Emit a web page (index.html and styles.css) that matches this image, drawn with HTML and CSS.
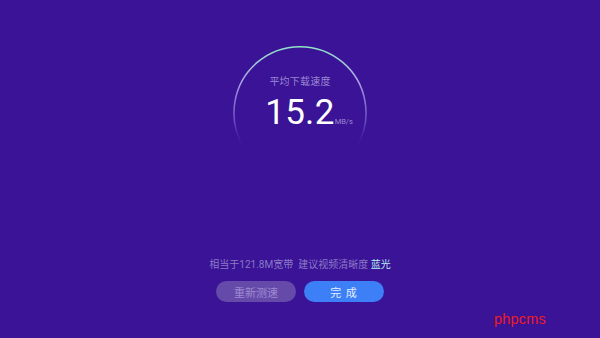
FILE: index.html
```html
<!DOCTYPE html>
<html>
<head>
<meta charset="utf-8">
<link rel="stylesheet" href="styles.css">
</head>
<body>
<div class="page">
  <div class="gauge">
    <svg class="arc" width="136" height="136" viewBox="0 0 136 136">
      <defs>
        <linearGradient id="g" x1="0" y1="0" x2="0" y2="1" gradientUnits="objectBoundingBox">
          <stop offset="0" stop-color="#8fe6c8"/>
          <stop offset="0.35" stop-color="#b9b3ee" stop-opacity="0.9"/>
          <stop offset="0.75" stop-color="#8a6fe0" stop-opacity="0.6"/>
          <stop offset="1" stop-color="#5a36c0" stop-opacity="0"/>
        </linearGradient>
      </defs>
      <path d="M 11 101 A 66 66 0 1 1 125 101" fill="none" stroke="url(#g)" stroke-width="1.6" stroke-linecap="round"/>
    </svg>
    <div class="title">平均下载速度</div>
    <div class="speed"><span class="num">15.2</span><span class="unit">MB/s</span></div>
  </div>
  <div class="info">相当于121.8M宽带&nbsp;&nbsp;建议视频清晰度 <span class="hl">蓝光</span></div>
  <div class="buttons">
    <button class="btn retry">重新测速</button>
    <button class="btn done">完 成</button>
  </div>
</div>
<div class="mark">phpcms</div>
</body>
</html>
```
FILE: styles.css
```css
html, body {
  margin: 0;
  padding: 0;
  width: 600px;
  height: 338px;
  overflow: hidden;
  background: #3a1396;
  font-family: Roboto, "Noto Sans CJK SC", sans-serif;
}
.page {
  display: flex;
  flex-direction: column;
  align-items: center;
  padding-top: 45px;
}
.gauge {
  position: relative;
  width: 136px;
  height: 136px;
  display: flex;
  flex-direction: column;
  align-items: center;
  padding-top: 30px;
  box-sizing: border-box;
}
.arc {
  position: absolute;
  left: 0;
  top: 0;
}
.title {
  font-size: 10px;
  line-height: 13px;
  color: #9a86d2;
  letter-spacing: 0.2px;
}
.speed {
  display: flex;
  align-items: baseline;
  margin-top: 5px;
  margin-left: 18px;
}
.num {
  font-size: 35px;
  line-height: 40px;
  color: #ffffff;
  letter-spacing: 0.3px;
}
.unit {
  font-size: 7.5px;
  color: #9a86d2;
  margin-left: 0;
}
.info {
  margin-top: 77px;
  font-size: 10px;
  line-height: 14px;
  color: #8b78c6;
}
.hl {
  color: #b5ecf4;
}
.buttons {
  display: flex;
  gap: 8px;
  margin-top: 9px;
}
.btn {
  width: 80px;
  height: 21px;
  border: none;
  border-radius: 11px;
  font-family: Roboto, "Noto Sans CJK SC", sans-serif;
  font-size: 11px;
  padding: 0;
}
.retry {
  background: #654aaa;
  color: #9d8bd0;
}
.done {
  background: #3d7ff6;
  color: #e6efff;
  letter-spacing: 1px;
}
.mark {
  position: absolute;
  left: 494px;
  top: 311px;
  font-family: "Liberation Sans", Arial, sans-serif;
  font-size: 14.5px;
  color: #ee1c25;
  letter-spacing: 0.2px;
}
```
